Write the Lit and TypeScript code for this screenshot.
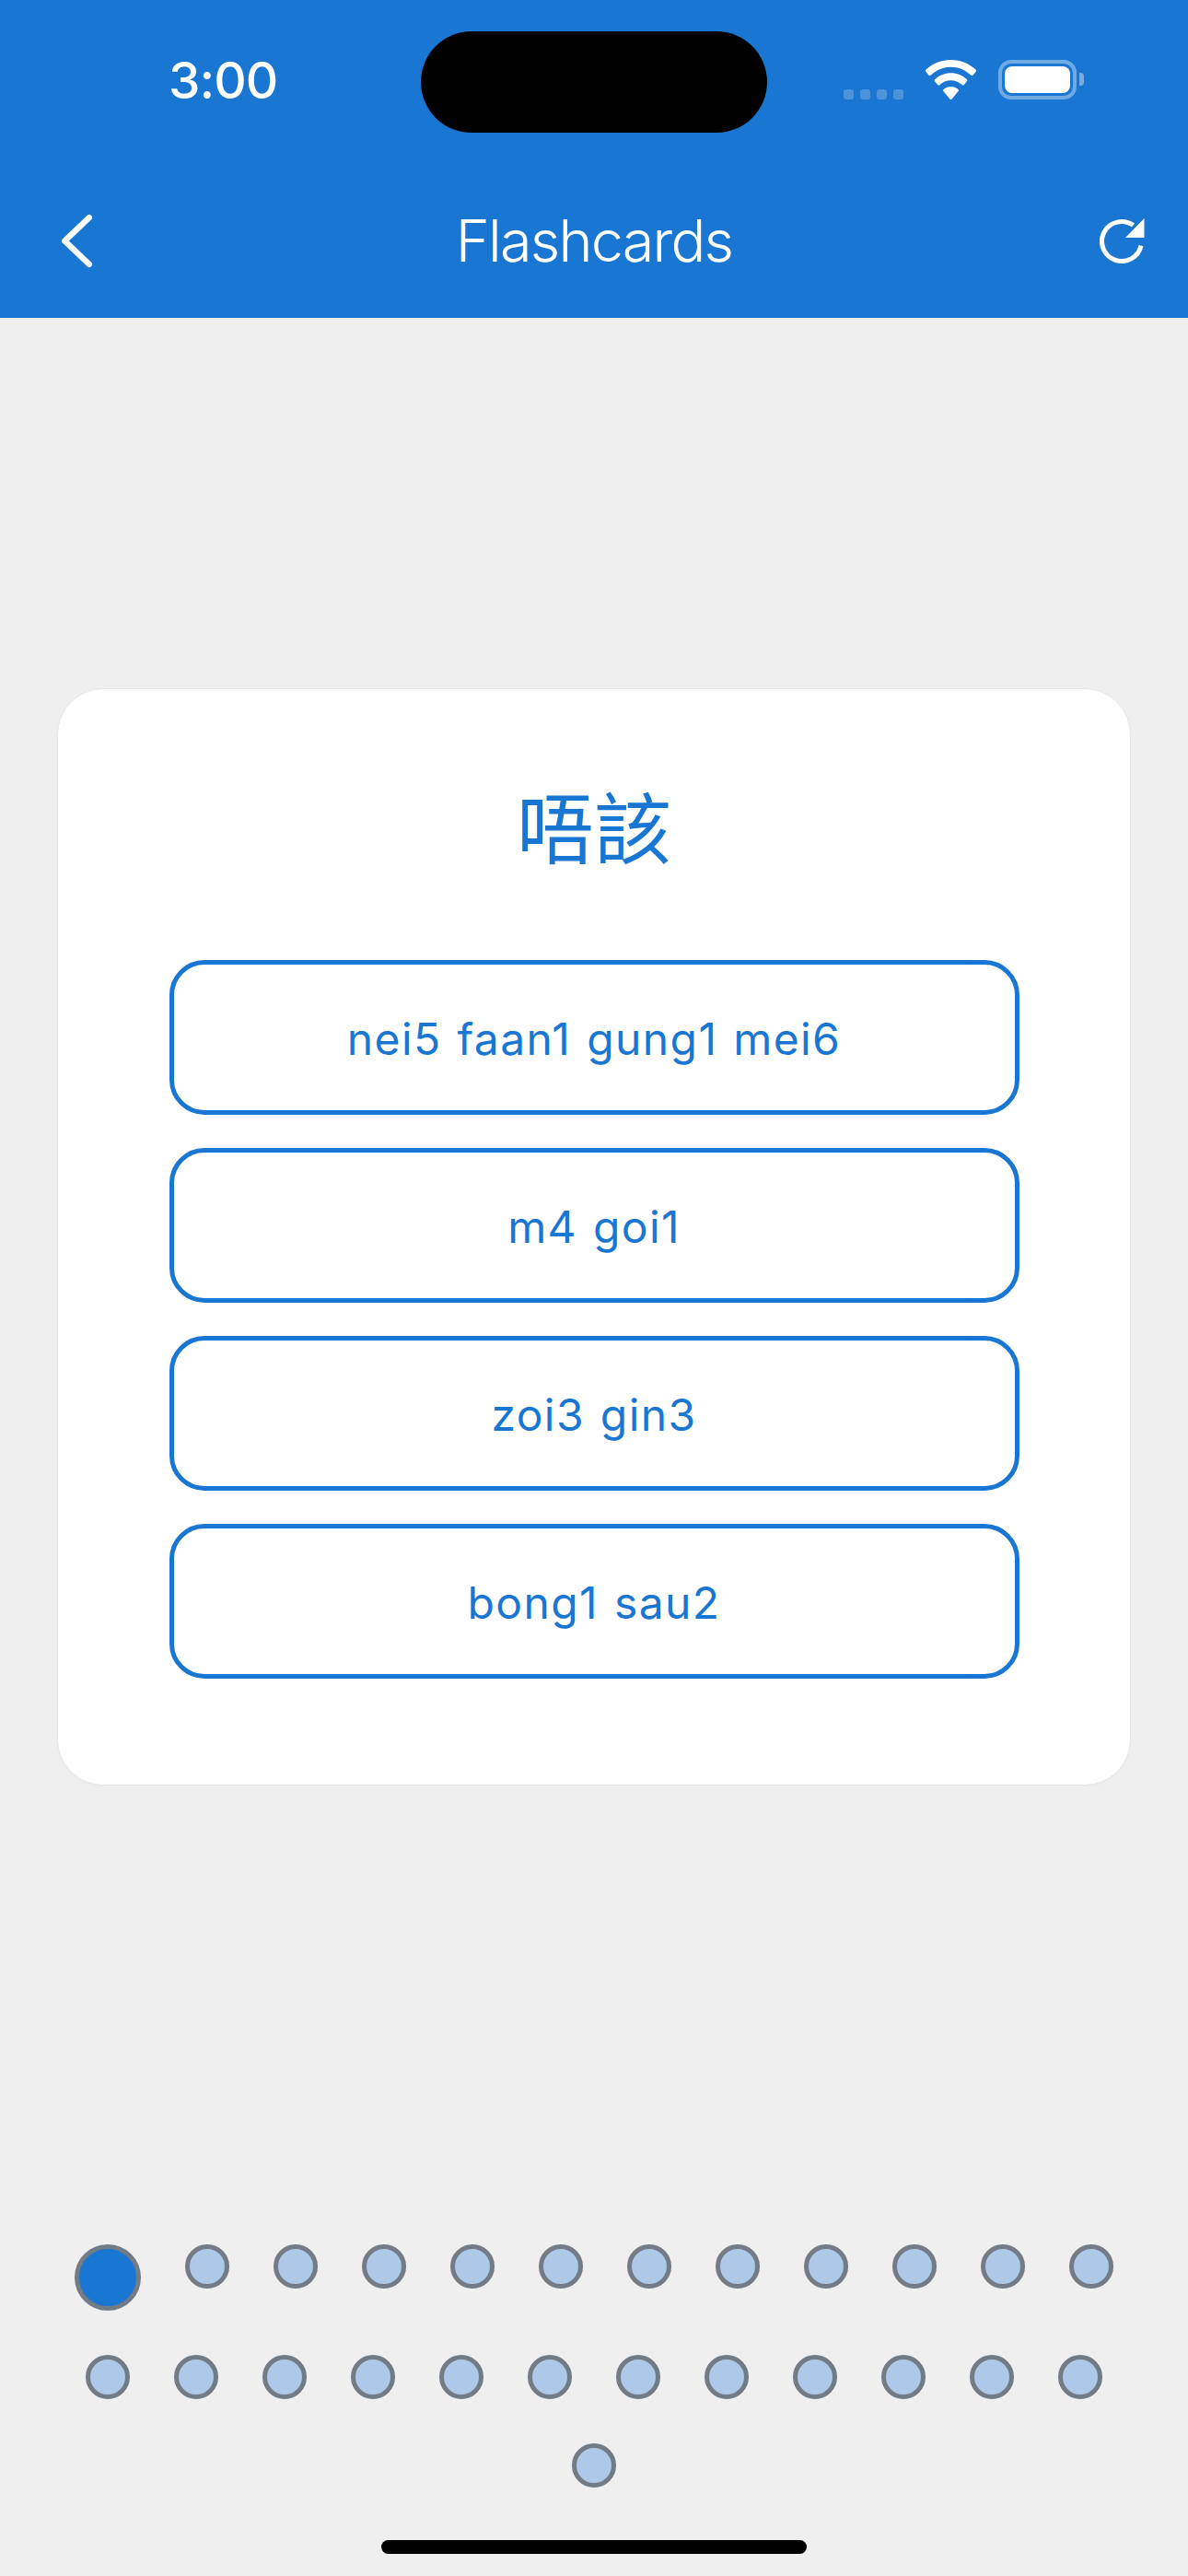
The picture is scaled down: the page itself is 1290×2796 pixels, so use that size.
import { LitElement, html, css, svg } from "lit";
import { customElement } from "lit/decorators.js";

const OPTIONS = ["nei5 faan1 gung1 mei6", "m4 goi1", "zoi3 gin3", "bong1 sau2"];
const DOTS = Array.from({ length: 25 }, (_, i) => i);

@customElement("app-root")
export class AppRoot extends LitElement {
  static styles = css`
    :host {
      display: block;
      width: 1290px;
      height: 2796px;
      background: #efefef;
      font-family: Inter, "Noto Sans", "Noto Sans CJK TC", sans-serif;
    }
    .page {
      height: 2796px;
      display: flex;
      flex-direction: column;
      position: relative;
      overflow: hidden;
    }
    .header {
      height: 345px;
      flex: none;
      background: #1976d2;
      color: #fff;
      position: relative;
      display: flex;
      flex-direction: column;
    }
    .status {
      height: 174px;
      flex: none;
      display: flex;
      padding: 0 113px 0 183px;
      justify-content: space-between;
      align-items: flex-start;
    }
    .time {
      margin-top: 54px;
      font-size: 55px;
      line-height: 66px;
      font-weight: 500;
      letter-spacing: -1px;
    }
    .island {
      position: absolute;
      left: 457px;
      top: 34px;
      width: 376px;
      height: 110px;
      border-radius: 55px;
      background: #000;
    }
    .status-icons {
      display: flex;
      align-items: flex-end;
      margin-top: 65px;
      height: 43px;
    }
    .signal {
      display: flex;
      gap: 7px;
      margin-right: 23px;
    }
    .signal span {
      width: 11px;
      height: 11px;
      border-radius: 3px;
      background: rgba(255, 255, 255, 0.22);
    }
    .wifi {
      width: 57px;
      height: 43px;
      display: block;
      margin-right: 23px;
    }
    .battery {
      width: 85px;
      height: 43px;
      box-sizing: border-box;
      border: 4px solid rgba(255, 255, 255, 0.38);
      border-radius: 14px;
      padding: 3px;
      display: flex;
    }
    .battery i {
      flex: 1;
      background: #fff;
      border-radius: 8px;
    }
    .nub {
      width: 5px;
      height: 14px;
      margin: 0 0 15px 3px;
      border-radius: 0 4px 4px 0;
      background: rgba(255, 255, 255, 0.4);
    }
    .nav {
      flex: 1;
      display: grid;
      grid-template-columns: 1fr auto 1fr;
      align-items: center;
      padding: 0 47px;
    }
    .nav svg {
      display: block;
    }
    .back {
      margin: 2px 0 0 16px;
    }
    .refresh {
      justify-self: end;
      margin-top: 3px;
    }
    .title {
      font-size: 63px;
      line-height: 76px;
      font-weight: 300;
      letter-spacing: -1.8px;
      margin-top: 3px;
    }
    .main {
      height: 1995px;
      flex: none;
      box-sizing: border-box;
      padding: 402px 62px 0;
    }
    .card {
      box-sizing: border-box;
      height: 1191px;
      background: #fff;
      border: 1.5px solid #e6e6e6;
      border-radius: 50px;
      padding: 87px 120.5px 0;
      box-shadow: 0 1px 3px rgba(0, 0, 0, 0.02);
    }
    .word {
      font-family: "Noto Sans CJK TC", "Noto Sans", sans-serif;
      color: #1976d2;
      font-size: 84px;
      line-height: 120px;
      text-align: center;
      margin-bottom: 87px;
    }
    .options {
      display: flex;
      flex-direction: column;
      gap: 36px;
    }
    .option {
      box-sizing: border-box;
      height: 168px;
      border: 5px solid #1976d2;
      border-radius: 38px;
      padding-top: 3px;
      display: flex;
      align-items: center;
      justify-content: center;
      color: #1976d2;
      font-size: 48px;
      font-weight: 375;
      letter-spacing: 1.4px;
      word-spacing: 2px;
    }
    .dots {
      display: flex;
      flex-wrap: wrap;
      justify-content: center;
      align-items: flex-start;
      gap: 48px;
      padding: 96px 63px 0;
    }
    .dot {
      box-sizing: border-box;
      width: 48px;
      height: 48px;
      border-radius: 50%;
      border: 5px solid #737b87;
      background: #adc9e7;
    }
    .dot.active {
      width: 72px;
      height: 72px;
      background: #1976d2;
    }
    .home {
      position: absolute;
      left: 414px;
      top: 2757px;
      width: 462px;
      height: 15px;
      border-radius: 8px;
      background: #000;
    }
  `;

  render() {
    return html`
      <div class="page">
        <header class="header">
          <div class="status">
            <span class="time">3:00</span>
            <div class="status-icons">
              <div class="signal"><span></span><span></span><span></span><span></span></div>
              <svg class="wifi" viewBox="0 0 57 43">
                ${svg`<path fill="#fff" d="M28.5 0C18 0 8.5 4 1.5 10.6c-.7.7-.8 1.5-.2 2.2l3.1 3.7c.6.8 1.5.8 2.3.1C12.500 11 20.200 7.700 28.500 7.700S44.500 11 50.300 16.600c.8.700 1.700.700 2.300-.1l3.100-3.700c.6-.7.5-1.500-.2-2.200C48.500 4 39 0 28.500 0Z"/>
                <path fill="#fff" d="M28.500 14.300c-6.600 0-12.700 2.600-17.200 6.800-.7.700-.8 1.500-.2 2.200l3.100 3.700c.6.800 1.600.8 2.300.1 3.200-3 7.400-4.800 12-4.800s8.800 1.800 12 4.800c.7.700 1.700.700 2.300-.1l3.100-3.700c.6-.7.500-1.500-.2-2.200-4.500-4.200-10.600-6.800-17.200-6.800Z"/>
                <path fill="#fff" d="M28.500 29c-3 0-5.800 1.100-7.900 3-.7.700-.8 1.400-.2 2.100l7 8.300c.6.700 1.600.700 2.200 0l7-8.300c.6-.7.500-1.400-.2-2.100-2.100-1.900-4.900-3-7.900-3Z"/>`}
              </svg>
              <div class="battery"><i></i></div>
              <div class="nub"></div>
            </div>
          </div>
          <div class="island"></div>
          <nav class="nav">
            <svg class="back" width="40" height="64" viewBox="0 0 40 64" fill="none" stroke="#fff" stroke-width="6.500" stroke-linecap="round" stroke-linejoin="round">
              <path d="M33.750 7.250 7.250 32.500l26.500 25.250"/>
            </svg>
            <span class="title">Flashcards</span>
            <svg class="refresh" width="49" height="49" viewBox="0 0 49 49" fill="none">
              <path d="M36.500 7.500A21.500 21.500 0 1 0 45 29.600" stroke="#fff" stroke-width="5"/>
              <path d="M48.500 0v21H28Z" fill="#fff"/>
            </svg>
          </nav>
        </header>
        <main class="main">
          <section class="card">
            <div class="word" lang="zh-Hant">唔該</div>
            <div class="options">
              ${OPTIONS.map((o) => html`<div class="option">${o}</div>`)}
            </div>
          </section>
        </main>
        <div class="dots">
          ${DOTS.map((i) => html`<span class="dot ${i === 0 ? "active" : ""}"></span>`)}
        </div>
        <div class="home"></div>
      </div>
    `;
  }
}
